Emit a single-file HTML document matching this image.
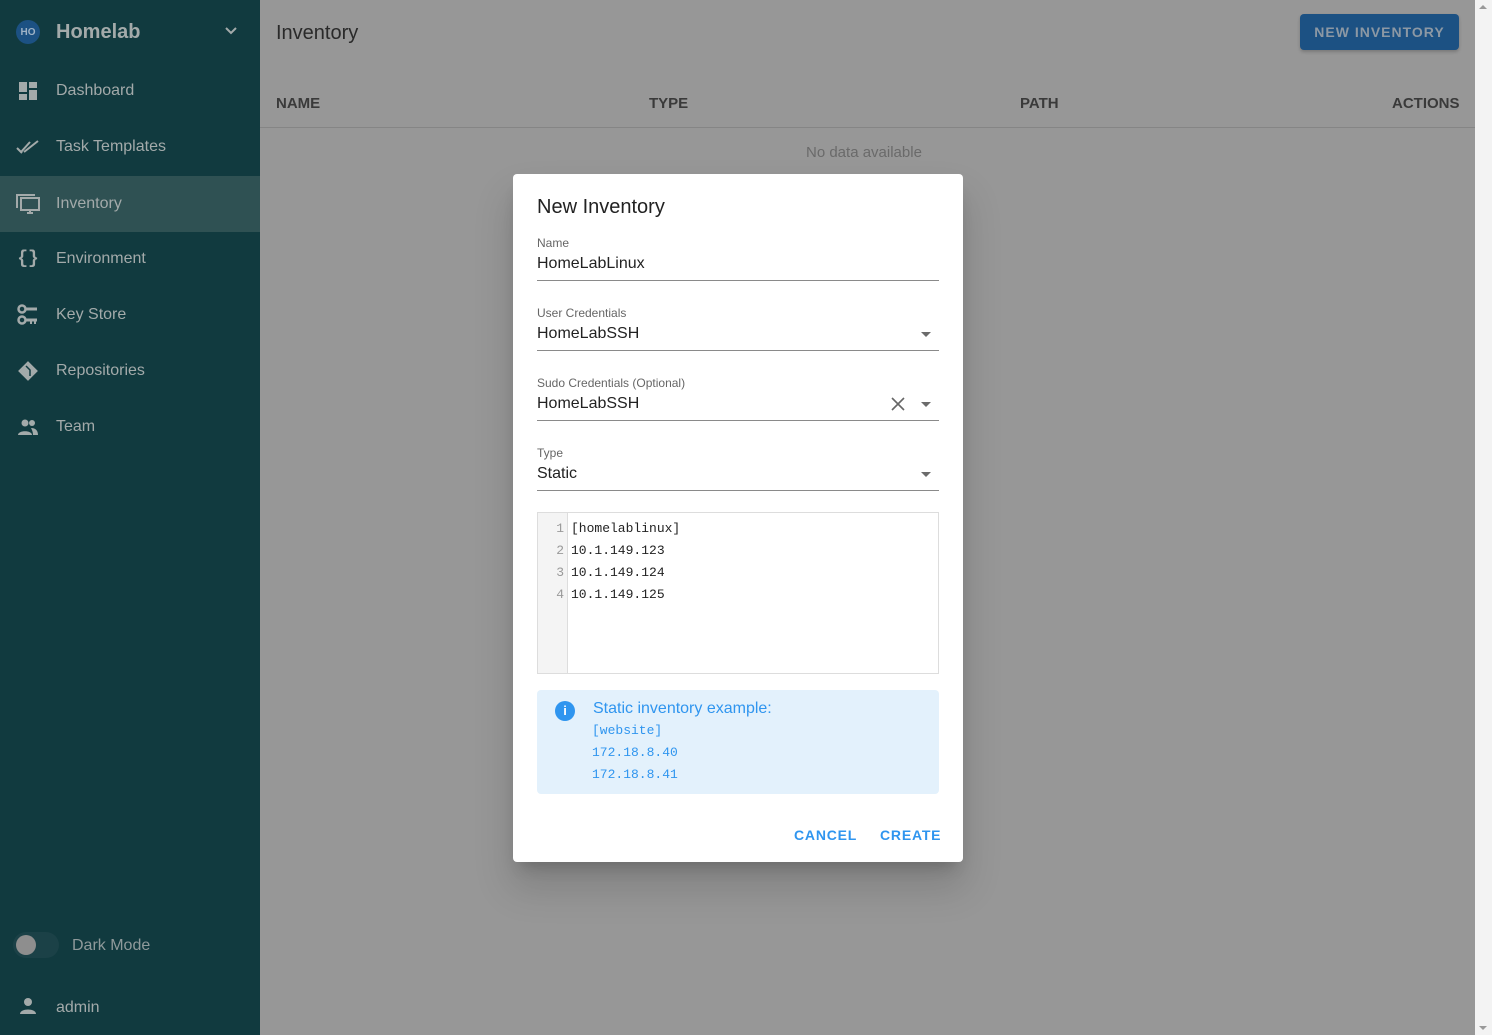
<!DOCTYPE html>
<html><head><meta charset="utf-8"><style>
*{box-sizing:border-box;margin:0;padding:0}
body{width:1492px;height:1035px;overflow:hidden;font-family:"Liberation Sans",Roboto,sans-serif;background:#979797;position:relative}
.side{position:absolute;left:0;top:0;width:260px;height:1035px;background:#113a3f;color:#a3aaaa}
.item{position:absolute;left:0;width:260px;height:56px;display:flex;align-items:center;font-size:16px}
.item .ic{width:56px;display:flex;justify-content:center;padding-left:0}
.item span{position:absolute;left:56px;top:19px}
.sel{background:#2f5153}
.main{position:absolute;left:260px;top:0;width:1215px;height:1035px}
.scroll{position:absolute;right:0;top:0;width:17px;height:1035px;background:#f3f3f3}
.dlg{position:absolute;left:513px;top:174px;width:450px;height:688px;background:#fff;border-radius:4px;box-shadow:0 11px 15px -7px rgba(0,0,0,.2),0 24px 38px 3px rgba(0,0,0,.14)}
.lbl{position:absolute;left:24px;font-size:12px;color:#666}
.val{position:absolute;left:24px;font-size:16px;color:#222}
.line{position:absolute;left:24px;width:402px;height:1px;background:#8a8a8a}
.arr{position:absolute;left:408px;width:0;height:0;border-left:5px solid transparent;border-right:5px solid transparent;border-top:5px solid #6b6b6b}
.mono{font-family:"Liberation Mono","DejaVu Sans Mono",monospace}
</style></head><body>
<div class="side">
 <div style="position:absolute;left:16px;top:20px;width:24px;height:24px;border-radius:50%;background:#1c5183;color:#9eb2c6;font-size:10px;font-weight:bold;display:flex;align-items:center;justify-content:center">HO</div>
 <div style="position:absolute;left:56px;top:21px;font-size:20px;font-weight:bold;color:#a3aaaa">Homelab</div>
 <svg style="position:absolute;left:224px;top:26px" width="14" height="10" viewBox="0 0 14 10"><path d="M2 2l5 5 5-5" stroke="#a3aaaa" stroke-width="2" fill="none"/></svg>
 <div class="item" style="top:63px"><div class="ic"><svg width="20" height="20" viewBox="0 0 20 20" fill="#a3aaaa"><rect x="1" y="1" width="8" height="10"/><rect x="11" y="1" width="8" height="6"/><rect x="1" y="13" width="8" height="6"/><rect x="11" y="9" width="8" height="10"/></svg></div><span>Dashboard</span></div>
 <div class="item" style="top:119px"><div class="ic"><svg width="24" height="16" viewBox="0 0 24 16"><path d="M1 9l4 4 9-10M8 13l14-11M4 12l2 2" stroke="#a3aaaa" stroke-width="2" fill="none"/></svg></div><span>Task Templates</span></div>
 <div class="item sel" style="top:176px"><div class="ic"><svg width="26" height="22" viewBox="0 0 26 22"><path d="M2 15V2h18" stroke="#a3aaaa" stroke-width="2" fill="none"/><rect x="6" y="5" width="18" height="12" stroke="#a3aaaa" stroke-width="2" fill="none"/><path d="M12 20h6M15 17v3" stroke="#a3aaaa" stroke-width="2"/></svg></div><span>Inventory</span></div>
 <div class="item" style="top:231px"><div class="ic" style="font-size:18px;font-weight:bold;font-family:'Liberation Mono',monospace">{}</div><span>Environment</span></div>
 <div class="item" style="top:287px"><div class="ic"><svg width="22" height="22" viewBox="0 0 22 22" fill="#a3aaaa"><circle cx="5" cy="5" r="3.5" fill="none" stroke="#a3aaaa" stroke-width="2.5"/><rect x="8" y="3.5" width="12" height="3"/><circle cx="5" cy="16" r="3.5" fill="none" stroke="#a3aaaa" stroke-width="2.5"/><rect x="8" y="14.5" width="12" height="3"/><rect x="13" y="17" width="2" height="3"/><rect x="17" y="17" width="2" height="3"/></svg></div><span>Key Store</span></div>
 <div class="item" style="top:343px"><div class="ic"><svg width="22" height="22" viewBox="0 0 22 22"><rect x="4" y="4" width="14" height="14" transform="rotate(45 11 11)" fill="#a3aaaa"/><path d="M9 6l4 4v6M13 10" stroke="#113a3f" stroke-width="1.5" fill="none"/></svg></div><span>Repositories</span></div>
 <div class="item" style="top:399px"><div class="ic"><svg width="22" height="16" viewBox="0 0 22 16" fill="#a3aaaa"><circle cx="8" cy="4" r="3.5"/><circle cx="15" cy="4" r="3"/><path d="M1 16c0-5 14-5 14 0z"/><path d="M14 9c4 0 7 2 7 7h-5c0-3-1-5-2-7z"/></svg></div><span>Team</span></div>
 <div style="position:absolute;left:13px;top:932px;width:46px;height:26px;border-radius:13px;background:#1b4147"></div>
 <div style="position:absolute;left:16px;top:935px;width:20px;height:20px;border-radius:50%;background:#8e8e8e"></div>
 <div style="position:absolute;left:72px;top:937px;font-size:16px;color:#8f9a9b">Dark Mode</div>
 <svg style="position:absolute;left:19px;top:997px" width="18" height="18" viewBox="0 0 18 18" fill="#a3aaaa"><circle cx="9" cy="5" r="4"/><path d="M1 17c0-6 16-6 16 0z"/></svg>
 <div style="position:absolute;left:56px;top:999px;font-size:16px">admin</div>
</div>
<div class="main">
 <div style="position:absolute;left:16px;top:22px;font-size:20px;color:#2a2a2a">Inventory</div>
 <div style="position:absolute;left:1040px;top:14px;width:159px;height:36px;background:#1c5183;border-radius:4px;color:#8c98a4;font-size:14px;font-weight:bold;letter-spacing:1px;display:flex;align-items:center;justify-content:center;box-shadow:0 2px 3px rgba(0,0,0,.2)">NEW INVENTORY</div>
 <div style="position:absolute;top:95px;left:16px;font-size:15px;font-weight:bold;color:#3a3a3a">NAME</div>
 <div style="position:absolute;top:95px;left:389px;font-size:15px;font-weight:bold;color:#3a3a3a">TYPE</div>
 <div style="position:absolute;top:95px;left:760px;font-size:15px;font-weight:bold;color:#3a3a3a">PATH</div>
 <div style="position:absolute;top:95px;left:1132px;font-size:15px;font-weight:bold;color:#3a3a3a">ACTIONS</div>
 <div style="position:absolute;top:127px;left:0;width:1215px;height:1px;background:#858585"></div>
 <div style="position:absolute;top:144px;left:546px;font-size:15px;color:#6a6a6a">No data available</div>
</div>
<div class="scroll"><div style="position:absolute;left:4px;top:5px;border-left:4px solid transparent;border-right:4px solid transparent;border-bottom:4px solid #999"></div><div style="position:absolute;left:4px;bottom:5px;border-left:4px solid transparent;border-right:4px solid transparent;border-top:4px solid #999"></div></div>
<div class="dlg">
 <div style="position:absolute;left:24px;top:22px;font-size:20px;color:#222">New Inventory</div>
 <div class="lbl" style="top:62px">Name</div><div class="val" style="top:81px">HomeLabLinux</div><div class="line" style="top:106px"></div>
 <div class="lbl" style="top:132px">User Credentials</div><div class="val" style="top:151px">HomeLabSSH</div><div class="arr" style="top:158px"></div><div class="line" style="top:176px"></div>
 <div class="lbl" style="top:202px">Sudo Credentials (Optional)</div><div class="val" style="top:221px">HomeLabSSH</div>
 <svg style="position:absolute;left:378px;top:223px" width="14" height="14" viewBox="0 0 14 14"><path d="M1 1l12 12M13 1L1 13" stroke="#666" stroke-width="1.6"/></svg>
 <div class="arr" style="top:228px"></div><div class="line" style="top:246px"></div>
 <div class="lbl" style="top:272px">Type</div><div class="val" style="top:291px">Static</div><div class="arr" style="top:298px"></div><div class="line" style="top:316px"></div>
 <div style="position:absolute;left:24px;top:338px;width:402px;height:162px;border:1px solid #ddd">
  <div style="position:absolute;left:0;top:0;width:30px;height:160px;background:#f4f4f4;border-right:1px solid #ddd"></div>
  <div class="mono" style="position:absolute;left:0;top:5px;width:26px;text-align:right;font-size:13px;line-height:22px;color:#999">1<br>2<br>3<br>4</div>
  <div class="mono" style="position:absolute;left:33px;top:5px;font-size:13px;line-height:22px;color:#222">[homelablinux]<br>10.1.149.123<br>10.1.149.124<br>10.1.149.125</div>
 </div>
 <div style="position:absolute;left:24px;top:516px;width:402px;height:104px;background:#e3f1fc;border-radius:4px">
  <div style="position:absolute;left:18px;top:11px;width:20px;height:20px;border-radius:50%;background:#2f95ef;color:#fff;font-size:13px;font-weight:bold;text-align:center;line-height:20px">i</div>
  <div style="position:absolute;left:56px;top:10px;font-size:16px;color:#2f95ef">Static inventory example:</div>
  <div class="mono" style="position:absolute;left:55px;top:30px;font-size:13px;line-height:22px;color:#2f95ef">[website]<br>172.18.8.40<br>172.18.8.41</div>
 </div>
 <div style="position:absolute;left:281px;top:653px;font-size:14px;font-weight:bold;letter-spacing:0.8px;color:#2f95ef">CANCEL</div>
 <div style="position:absolute;left:367px;top:653px;font-size:14px;font-weight:bold;letter-spacing:0.8px;color:#2f95ef">CREATE</div>
</div>
</body></html>
